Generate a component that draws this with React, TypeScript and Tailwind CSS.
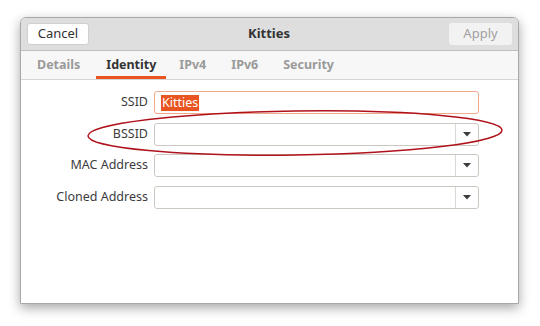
import React from "react";

function Arrow() {
  return (
    <svg width="8" height="5" viewBox="0 0 8 5">
      <path d="M0 0 L8 0 L4 4.5 Z" fill="#3c3c3c" />
    </svg>
  );
}

function Combo() {
  return (
    <div className="flex h-[23px] w-[325px] rounded-[3px] border border-[#cdc7c2] bg-white">
      <div className="flex-1" />
      <div className="flex w-[23px] items-center justify-center border-l border-[#dcd8d4]">
        <Arrow />
      </div>
    </div>
  );
}

export default function App() {
  const font = { fontFamily: '"Noto Sans", "Open Sans", sans-serif' };
  return (
    <div className="relative h-[326px] w-[540px] bg-white pl-[20px] pt-[17px]" style={font}>
      <div className="flex h-[287px] w-[499px] flex-col overflow-hidden rounded-t-[6px] border border-[#a8a8a8] bg-white shadow-[0_4px_12px_rgba(0,0,0,0.35)]">
        {/* header */}
        <div className="flex h-[33px] items-center justify-between border-b border-[#c0c0c0] bg-[#dedede] px-[6px]">
          <div className="flex h-[22px] w-[62px] items-center justify-center rounded-[3px] border border-[#d0d0d0] bg-white text-[13px] text-[#333]">
            Cancel
          </div>
          <div className="text-[13px] font-bold text-[#333]">Kitties</div>
          <div className="flex h-[22px] w-[63px] items-center justify-center rounded-[3px] bg-[#f2f2f2] text-[13px] text-[#a0a0a0]">
            Apply
          </div>
        </div>
        {/* tabs */}
        <div className="flex h-[29px] items-stretch border-b border-[#d6d6d6] bg-[#f7f7f7] pl-[6px] text-[12.5px] font-bold">
          <div className="flex items-center px-[10px] text-[#9a9a9a]">Details</div>
          <div className="ml-[6px] flex items-center border-b-[3px] border-[#e95420] px-[10px] pt-[3px] text-[#333]">Identity</div>
          <div className="flex items-center px-[13px] text-[#9a9a9a]">IPv4</div>
          <div className="flex items-center px-[12px] text-[#9a9a9a]">IPv6</div>
          <div className="flex items-center px-[13px] text-[#9a9a9a]">Security</div>
        </div>
        {/* form */}
        <div className="flex flex-col gap-[8.5px] pl-[8px] pt-[11px] text-[12.5px] text-[#3c3c3c]">
          <div className="flex items-center gap-[6px]">
            <div className="w-[119px] text-right">SSID</div>
            <div className="flex h-[23px] w-[325px] items-center rounded-[3px] border border-[#f0a98c] bg-white pl-[6px]">
              <span className="bg-[#e95420] px-[1px] leading-[16px] text-white">Kitties</span>
            </div>
          </div>
          <div className="flex items-center gap-[6px]">
            <div className="w-[119px] text-right">BSSID</div>
            <Combo />
          </div>
          <div className="flex items-center gap-[6px]">
            <div className="w-[119px] text-right">MAC Address</div>
            <Combo />
          </div>
          <div className="flex items-center gap-[6px]">
            <div className="w-[119px] text-right">Cloned Address</div>
            <Combo />
          </div>
        </div>
      </div>
      <svg className="pointer-events-none absolute left-0 top-0" width="540" height="326">
        <ellipse
          cx="295"
          cy="133"
          rx="207"
          ry="22"
          fill="none"
          stroke="#b0121b"
          strokeWidth="1.5"
          transform="rotate(-0.8 295 133)"
        />
      </svg>
    </div>
  );
}
